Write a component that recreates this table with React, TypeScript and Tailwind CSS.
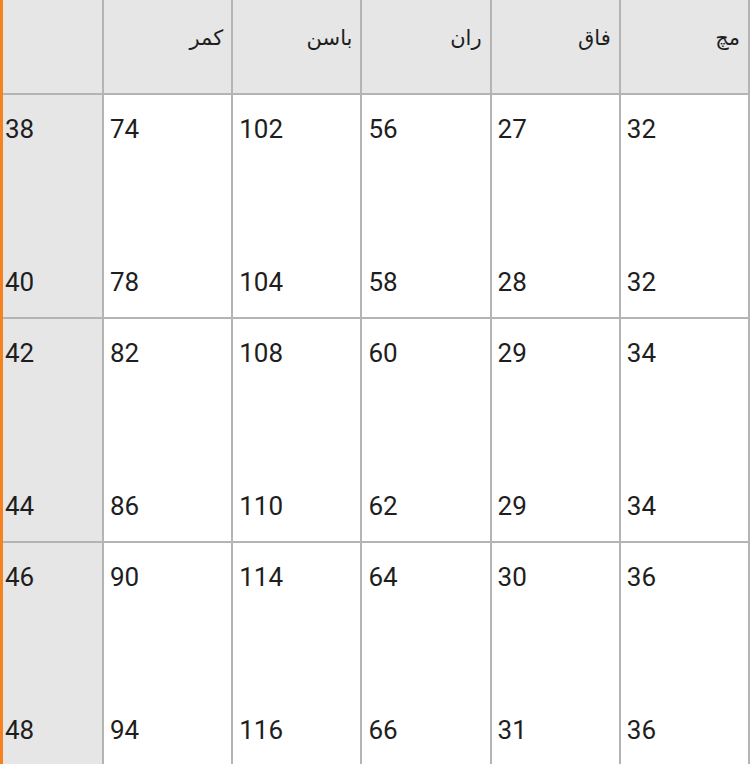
const headers = ["", "كمر", "باسن", "ران", "فاق", "مچ"]

// each group: two sizes shown in one tall row
const groups = [
  [
    ["38", "74", "102", "56", "27", "32"],
    ["40", "78", "104", "58", "28", "32"],
  ],
  [
    ["42", "82", "108", "60", "29", "34"],
    ["44", "86", "110", "62", "29", "34"],
  ],
  [
    ["46", "90", "114", "64", "30", "36"],
    ["48", "94", "116", "66", "31", "36"],
  ],
]

export default function App() {
  return (
    <div
      className="w-[750px] h-[764px] overflow-hidden bg-white border-l-[3px] border-[#f5821f] text-[#1e1e1e]"
      style={{ fontFamily: "Roboto, 'DejaVu Sans', sans-serif" }}
    >
      <div className="grid grid-cols-[101px_repeat(5,1fr)]">
        {headers.map((h, i) => (
          <div
            key={i}
            className="h-[95px] bg-[#e6e6e6] border-r-2 border-b-2 border-[#b4b4b4] pt-[22px] pr-[8px] text-right text-[21px] leading-[32px]"
            dir="rtl"
          >
            {h}
          </div>
        ))}
        {groups.map((g, gi) =>
          headers.map((_, ci) => (
            <div
              key={`${gi}-${ci}`}
              className={`h-[224px] border-r-2 border-b-2 border-[#b4b4b4] flex flex-col gap-[121px] pt-[18px] text-[26px] leading-[32px] ${
                ci === 0 ? "bg-[#e6e6e6] pl-[2px]" : "bg-white pl-[6px]"
              }`}
            >
              <span>{g[0][ci]}</span>
              <span>{g[1][ci]}</span>
            </div>
          ))
        )}
      </div>
    </div>
  )
}
